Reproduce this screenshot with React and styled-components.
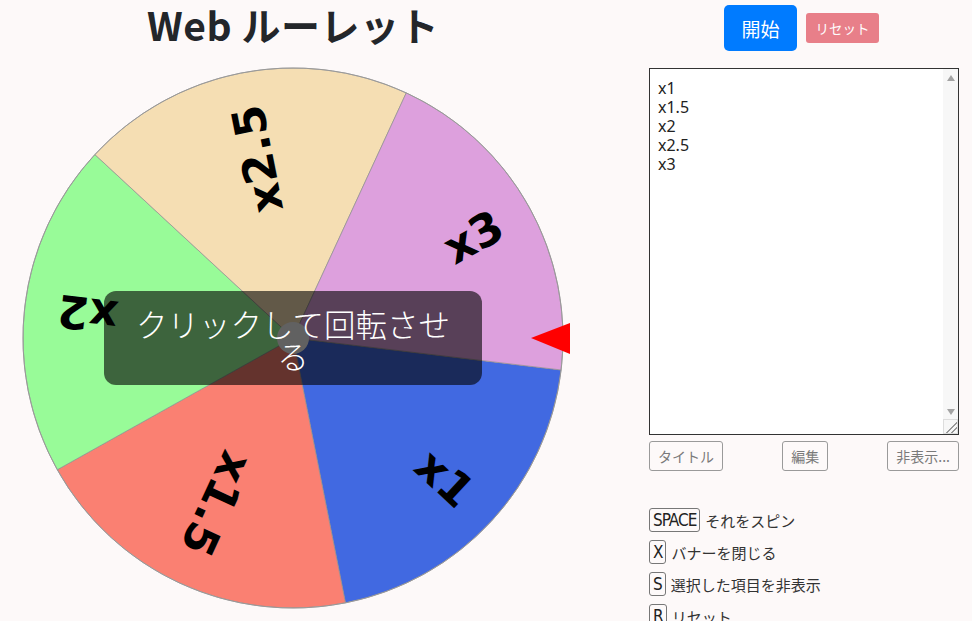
import React from "react";
import styled, { createGlobalStyle } from "styled-components";

const Global = createGlobalStyle`
  html, body { margin: 0; padding: 0; background: #fdf9f9; overflow: hidden; }
  body { font-family: "Noto Sans", "Noto Sans CJK JP", sans-serif; color: #222; }
`;

const Page = styled.div`
  display: flex;
  align-items: flex-start;
`;

const LeftCol = styled.div`
  width: 586px;
  display: flex;
  flex-direction: column;
  align-items: center;
`;

const Title = styled.h1`
  margin: -4px 0 -3px;
  font-family: "Noto Sans CJK JP", sans-serif;
  font-weight: 700;
  font-size: 39px;
  line-height: 57px;
  color: #23262a;
  letter-spacing: 0.5px;
`;

const WheelWrap = styled.div`
  position: relative;
  width: 586px;
  height: 571px;
`;

const Overlay = styled.div`
  position: absolute;
  left: 50%;
  top: 288px;
  transform: translate(-50%, -50%);
  width: 378px;
  height: 94px;
  box-sizing: border-box;
  padding: 16px 20px 0;
  border-radius: 12px;
  background: rgba(0, 0, 0, 0.6);
  color: #fff;
  font-family: "Noto Sans CJK JP", sans-serif;
  font-weight: 300;
  font-size: 31.5px;
  line-height: 32px;
  text-align: center;
`;

const RightCol = styled.div`
  margin-left: 63px;
  width: 310px;
  display: flex;
  flex-direction: column;
`;

const TopButtons = styled.div`
  display: flex;
  align-items: center;
  justify-content: center;
  gap: 9px;
  height: 46px;
  margin: 5px 5px 17px 0;
`;

const Button = styled.button`
  border: none;
  color: #fff;
  font-family: "Noto Sans CJK JP", sans-serif;
  width: 73px;
  padding: 0;
  cursor: pointer;
  background: ${(p) => (p.$variant === "danger" ? "#dc3545" : "#007bff")};
  opacity: ${(p) => (p.$variant === "danger" ? 0.62 : 1)};
  height: ${(p) => (p.$variant === "danger" ? "30px" : "46px")};
  font-size: ${(p) => (p.$variant === "danger" ? "13.5px" : "19px")};
  border-radius: ${(p) => (p.$variant === "danger" ? "3px" : "5px")};
`;

const TextWrap = styled.div`
  position: relative;
  width: 310px;
  height: 367px;
`;

const ListArea = styled.textarea`
  width: 310px;
  height: 367px;
  box-sizing: border-box;
  border: 1px solid #333;
  background: #fff;
  padding: 10px 24px 10px 8px;
  font-family: "Noto Sans", sans-serif;
  font-size: 16px;
  line-height: 19px;
  color: #222;
  resize: vertical;
  overflow-y: auto;
  margin: 0;
  display: block;

  &::-webkit-resizer {
    background-color: #f7f7f7;
    border: 1px solid #ddd;
    background-image: linear-gradient(135deg, transparent 55%, #999 55%, #999 62%, transparent 62%, transparent 75%, #999 75%, #999 82%, transparent 82%);
  }
`;

const ScrollTrack = styled.div`
  position: absolute;
  top: 1px;
  right: 1px;
  bottom: 16px;
  width: 15px;
  background: #f7f7f7;
  display: flex;
  flex-direction: column;
  justify-content: space-between;
  align-items: center;
  padding: 6px 0 4px;
  box-sizing: border-box;
  pointer-events: none;
`;

const Arrow = styled.span`
  width: 0;
  height: 0;
  border-left: 4.5px solid transparent;
  border-right: 4.5px solid transparent;
  ${(p) =>
    p.$dir === "up"
      ? "border-bottom: 6px solid #a3a3a3;"
      : "border-top: 6px solid #a3a3a3;"}
`;

const ToolRow = styled.div`
  display: flex;
  justify-content: space-between;
  margin-top: 6px;
`;

const ToolButton = styled.button`
  height: 30px;
  padding: 0 8px;
  border: 1px solid #9a9a9a;
  border-radius: 3px;
  background: transparent;
  color: #7a7a7a;
  font-family: "Noto Sans CJK JP", sans-serif;
  font-size: 14px;
`;

const Shortcuts = styled.ul`
  list-style: none;
  margin: 33px 0 0;
  padding: 0;
`;

const Shortcut = styled.li`
  display: flex;
  align-items: center;
  gap: 5px;
  height: 32px;
  font-family: "Noto Sans CJK JP", sans-serif;
  font-size: 15px;
  color: #333;
`;

const Kbd = styled.kbd`
  display: inline-flex;
  align-items: center;
  height: 24px;
  box-sizing: border-box;
  padding: 0 3px;
  border: 1px solid #777;
  border-radius: 3px;
  font-family: "Liberation Sans Narrow", "DejaVu Sans Condensed", "Liberation Sans", sans-serif;
  font-stretch: condensed;
  font-size: 17px;
  letter-spacing: -1px;
  color: #222;
`;

const CX = 293;
const CY = 288;
const R = 270;
const segments = [
  { label: "x1", color: "#4169E1" },
  { label: "x1.5", color: "#FA8072" },
  { label: "x2", color: "#98FB98" },
  { label: "x2.5", color: "#F5DEB3" },
  { label: "x3", color: "#DDA0DD" },
];
const OFFSET = 6.8;
const rad = (d) => (d * Math.PI) / 180;

function Wheel() {
  return (
    <svg width="586" height="571" viewBox="0 0 586 571">
      {segments.map((s, i) => {
        const a0 = OFFSET + i * 72;
        const a1 = a0 + 72;
        const x0 = CX + R * Math.cos(rad(a0));
        const y0 = CY + R * Math.sin(rad(a0));
        const x1 = CX + R * Math.cos(rad(a1));
        const y1 = CY + R * Math.sin(rad(a1));
        return (
          <path
            key={s.label}
            d={`M${CX} ${CY} L${x0} ${y0} A${R} ${R} 0 0 1 ${x1} ${y1} Z`}
            fill={s.color}
            stroke="#8f8f8f"
            strokeWidth="0.7"
          />
        );
      })}
      {segments.map((s, i) => {
        const mid = OFFSET + i * 72 + 36;
        return (
          <text
            key={s.label}
            transform={`translate(${CX} ${CY}) rotate(${mid})`}
            x="237"
            y="0"
            textAnchor="end"
            dominantBaseline="central"
            fontFamily="'DejaVu Sans', sans-serif"
            fontWeight="700"
            fontSize="45"
            fill="#000"
          >
            {s.label}
          </text>
        );
      })}
      <circle cx={CX} cy={CY} r={R} fill="none" stroke="#999" strokeWidth="1" />
      <circle cx={CX} cy={CY} r="16" fill="#f2f2f2" />
      <polygon points={`531,${CY} 570,${CY - 15} 570,${CY + 16}`} fill="#ff0000" />
    </svg>
  );
}

export default function App() {
  return (
    <Page>
      <Global />
      <LeftCol>
        <Title>Web ルーレット</Title>
        <WheelWrap>
          <Wheel />
          <Overlay>クリックして回転させる</Overlay>
        </WheelWrap>
      </LeftCol>
      <RightCol>
        <TopButtons>
          <Button>開始</Button>
          <Button $variant="danger">リセット</Button>
        </TopButtons>
        <TextWrap>
          <ListArea defaultValue={"x1\nx1.5\nx2\nx2.5\nx3"} />
          <ScrollTrack>
            <Arrow $dir="up" />
            <Arrow $dir="down" />
          </ScrollTrack>
        </TextWrap>
        <ToolRow>
          <ToolButton>タイトル</ToolButton>
          <ToolButton>編集</ToolButton>
          <ToolButton>非表示...</ToolButton>
        </ToolRow>
        <Shortcuts>
          <Shortcut><Kbd>SPACE</Kbd>それをスピン</Shortcut>
          <Shortcut><Kbd>X</Kbd>バナーを閉じる</Shortcut>
          <Shortcut><Kbd>S</Kbd>選択した項目を非表示</Shortcut>
          <Shortcut><Kbd>R</Kbd>リセット</Shortcut>
        </Shortcuts>
      </RightCol>
    </Page>
  );
}
